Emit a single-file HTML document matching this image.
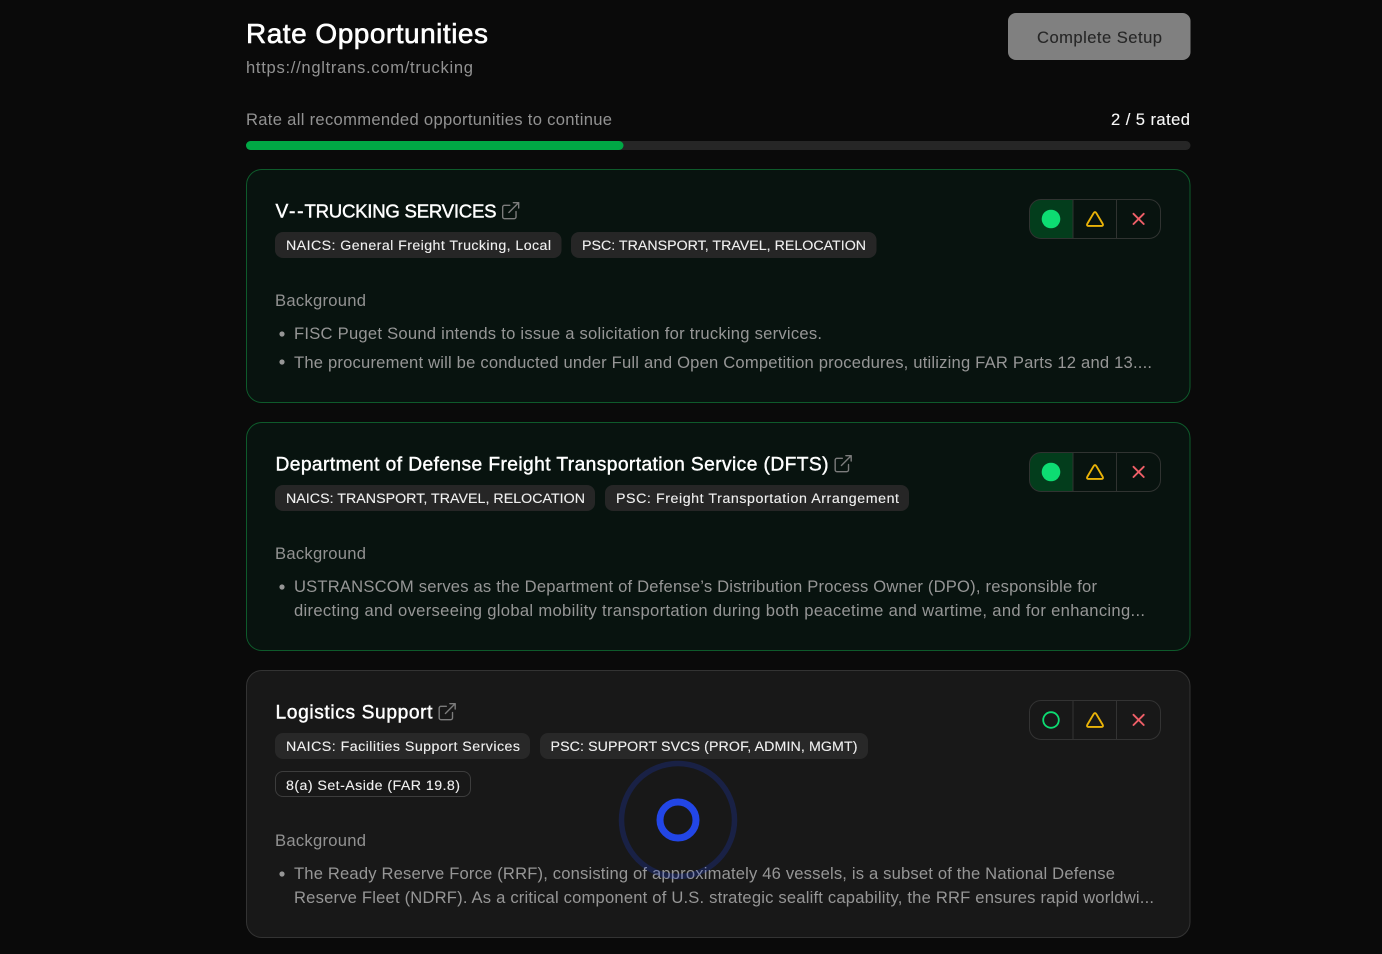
<!DOCTYPE html>
<html lang="en"><head><meta charset="utf-8"><title>Rate Opportunities</title>
<style>
html,body{margin:0;padding:0;background:#0a0a0a;width:1382px;height:954px;overflow:hidden}
svg{position:absolute;left:0;top:0;display:block}
text{font-family:"Liberation Sans",sans-serif;white-space:pre}
.h1{font-size:28px;fill:#fff;stroke:#fff;stroke-width:.6px}
.t{font-size:19.2px;fill:#fff;stroke:#fff;stroke-width:.42px}
.g{font-size:16.600px;fill:#929292}
.b{font-size:16.600px;fill:#969696}
.p{font-size:14.200px;fill:#f0f0f0;stroke:#f0f0f0;stroke-width:.12px}
.w{font-size:16.600px;fill:#f8f8f8;stroke:#f8f8f8;stroke-width:.12px}
.ext{fill:none;stroke:#7c7c7c;stroke-width:1.55;stroke-linecap:round;stroke-linejoin:round}
</style></head><body>
<svg width="1382" height="954" viewBox="0 0 1382 954" xmlns="http://www.w3.org/2000/svg">
<defs>
<g id="ext"><path class="ext" d="M18 13v6a2 2 0 0 1-2 2H5a2 2 0 0 1-2-2V8a2 2 0 0 1 2-2h6M15 3h6v6M10 14 21 3"/></g>
<g id="tri"><path d="M1093.600 213.200 Q1095 211 1096.400 213.200 L1102.600 223.600 Q1103.800 225.900 1101.400 225.900 L1088.600 225.900 Q1086.200 225.900 1087.400 223.600 Z" fill="none" stroke="#eab308" stroke-width="1.900" stroke-linejoin="round"/></g>
<g id="x"><path d="M1133.500 213.800 L1143.700 224 M1143.700 213.800 L1133.500 224" fill="none" stroke="#ef5f68" stroke-width="1.900" stroke-linecap="round"/></g>
</defs>
<rect width="1382" height="954" fill="#0a0a0a"/>

<text class="h1" x="246" y="43" textLength="242" lengthAdjust="spacing">Rate Opportunities</text>
<text class="g" x="246" y="73" textLength="227" lengthAdjust="spacing">https://ngltrans.com/trucking</text>
<rect x="1008" y="13" width="182.500" height="47" rx="8" fill="#808080"/>
<text x="1037" y="43" font-size="16.600" fill="#262626" stroke="#262626" stroke-width=".12" textLength="125" lengthAdjust="spacing">Complete Setup</text>

<text class="g" x="246" y="125" textLength="366" lengthAdjust="spacing">Rate all recommended opportunities to continue</text>
<text class="w" x="1111" y="125" textLength="79" lengthAdjust="spacing">2 / 5 rated</text>
<rect x="246" y="141" width="944.500" height="9" rx="4.500" fill="#262626"/>
<rect x="246" y="141" width="377.500" height="9" rx="4.500" fill="#00a845"/>

<!-- Card 1 -->
<rect x="246.500" y="169.500" width="943.500" height="233" rx="15.500" fill="#08130f" stroke="#0e5a2b"/>
<text class="t" x="275.500" y="217.500" textLength="28" lengthAdjust="spacing">V--</text>
<text class="t" x="304.500" y="217.500" style="font-size:18.600px" textLength="192" lengthAdjust="spacing">TRUCKING SERVICES</text>
<use href="#ext" transform="translate(500,200) scale(.89)"/>
<rect x="275" y="232" width="286.500" height="26" rx="8" fill="#262626"/>
<text class="p" x="286" y="250" textLength="265" lengthAdjust="spacing">NAICS: General Freight Trucking, Local</text>
<rect x="571" y="232" width="305.500" height="26" rx="8" fill="#262626"/>
<text class="p" x="582" y="250" textLength="284" lengthAdjust="spacing">PSC: TRANSPORT, TRAVEL, RELOCATION</text>
<text class="g" x="275" y="306" textLength="91" lengthAdjust="spacing">Background</text>
<circle cx="282" cy="334" r="2.600" fill="#969696"/>
<text class="b" x="294" y="339" textLength="528" lengthAdjust="spacing">FISC Puget Sound intends to issue a solicitation for trucking services.</text>
<circle cx="282" cy="362" r="2.600" fill="#969696"/>
<text class="b" x="294" y="368" textLength="858" lengthAdjust="spacing">The procurement will be conducted under Full and Open Competition procedures, utilizing FAR Parts 12 and 13....</text>
<g>
<path d="M1041 199.500 H1073 V238.500 H1041 A11.500 11.500 0 0 1 1029.500 227 V211 A11.500 11.500 0 0 1 1041 199.500 Z" fill="#033d1c"/>
<rect x="1029.500" y="199.500" width="131" height="39" rx="11.500" fill="none" stroke="#303331"/>
<path d="M1073 200V238M1116.500 200V238" stroke="#303331" stroke-width="1"/>
<circle cx="1051" cy="219" r="9.300" fill="#0ddc72"/>
<use href="#tri"/><use href="#x"/>
</g>

<!-- Card 2 -->
<rect x="246.500" y="422.500" width="943.500" height="228" rx="15.500" fill="#08130f" stroke="#0e5a2b"/>
<text class="t" x="275.500" y="470.500" textLength="553" lengthAdjust="spacing">Department of Defense Freight Transportation Service (DFTS)</text>
<use href="#ext" transform="translate(832.500,453) scale(.89)"/>
<rect x="275" y="485" width="320" height="26" rx="8" fill="#262626"/>
<text class="p" x="286" y="503" textLength="299" lengthAdjust="spacing">NAICS: TRANSPORT, TRAVEL, RELOCATION</text>
<rect x="605" y="485" width="304" height="26" rx="8" fill="#262626"/>
<text class="p" x="616" y="503" textLength="283" lengthAdjust="spacing">PSC: Freight Transportation Arrangement</text>
<text class="g" x="275" y="559" textLength="91" lengthAdjust="spacing">Background</text>
<circle cx="282" cy="587" r="2.600" fill="#969696"/>
<text class="b" x="294" y="592" textLength="803" lengthAdjust="spacing">USTRANSCOM serves as the Department of Defense’s Distribution Process Owner (DPO), responsible for</text>
<text class="b" x="294" y="616" textLength="851" lengthAdjust="spacing">directing and overseeing global mobility transportation during both peacetime and wartime, and for enhancing...</text>
<g transform="translate(0,253)">
<path d="M1041 199.500 H1073 V238.500 H1041 A11.500 11.500 0 0 1 1029.500 227 V211 A11.500 11.500 0 0 1 1041 199.500 Z" fill="#033d1c"/>
<rect x="1029.500" y="199.500" width="131" height="39" rx="11.500" fill="none" stroke="#303331"/>
<path d="M1073 200V238M1116.500 200V238" stroke="#303331" stroke-width="1"/>
<circle cx="1051" cy="219" r="9.300" fill="#0ddc72"/>
<use href="#tri"/><use href="#x"/>
</g>

<!-- Card 3 -->
<rect x="246.500" y="670.500" width="943.500" height="267" rx="15.500" fill="#181818" stroke="#333333"/>
<text class="t" x="275.500" y="718.500" textLength="157" lengthAdjust="spacing">Logistics Support</text>
<use href="#ext" transform="translate(436.500,701) scale(.89)"/>
<rect x="275" y="733" width="255" height="26" rx="8" fill="#282828"/>
<text class="p" x="286" y="751" textLength="234" lengthAdjust="spacing">NAICS: Facilities Support Services</text>
<rect x="540" y="733" width="328" height="26" rx="8" fill="#282828"/>
<text class="p" x="550.500" y="751" textLength="307" lengthAdjust="spacing">PSC: SUPPORT SVCS (PROF, ADMIN, MGMT)</text>
<rect x="275.500" y="771.500" width="195" height="25" rx="7.500" fill="none" stroke="#3d3d3d"/>
<text class="p" x="286" y="790" textLength="174" lengthAdjust="spacing">8(a) Set-Aside (FAR 19.8)</text>
<text class="g" x="275" y="846" textLength="91" lengthAdjust="spacing">Background</text>
<circle cx="282" cy="874" r="2.600" fill="#969696"/>
<text class="b" x="294" y="879" textLength="821" lengthAdjust="spacing">The Ready Reserve Force (RRF), consisting of approximately 46 vessels, is a subset of the National Defense</text>
<text class="b" x="294" y="903" textLength="860" lengthAdjust="spacing">Reserve Fleet (NDRF). As a critical component of U.S. strategic sealift capability, the RRF ensures rapid worldwi...</text>
<g transform="translate(0,501)">
<rect x="1029.500" y="199.500" width="131" height="39" rx="11.500" fill="none" stroke="#333333"/>
<path d="M1073 200V238M1116.500 200V238" stroke="#333333" stroke-width="1"/>
<circle cx="1051" cy="219" r="7.800" fill="none" stroke="#0ddc72" stroke-width="1.800"/>
<use href="#tri"/><use href="#x"/>
</g>

<!-- Spinner -->
<circle cx="678" cy="820" r="56.500" fill="none" stroke="#2246e6" stroke-opacity=".22" stroke-width="5.500"/>
<circle cx="678" cy="820" r="18" fill="none" stroke="#2246e6" stroke-width="7"/>
</svg>
</body></html>
